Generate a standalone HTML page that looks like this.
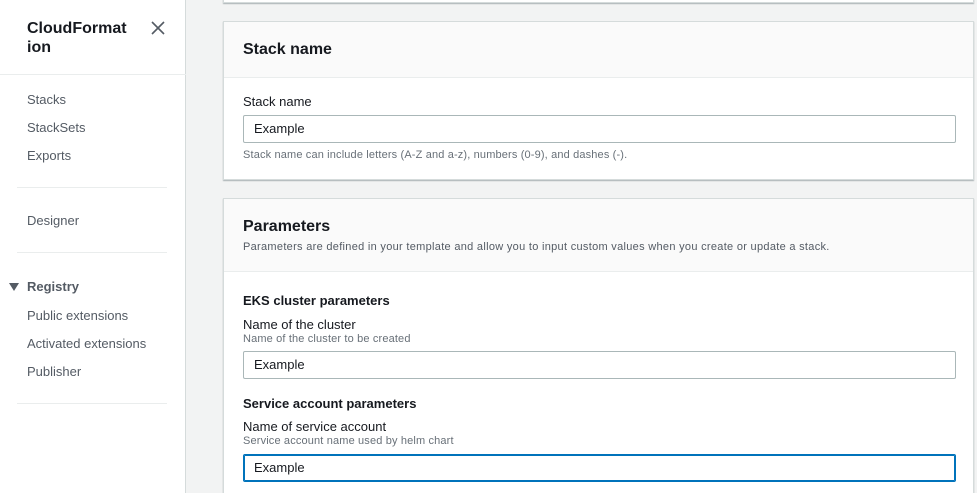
<!DOCTYPE html>
<html style="overflow:hidden;height:493px"><head><style>
*{margin:0;padding:0;box-sizing:border-box}
body{width:977px;height:493px;overflow:hidden;background:#f2f3f3;font-family:"Liberation Sans",sans-serif;color:#16191f;position:relative}
.sb{position:absolute;left:0;top:0;width:186px;height:493px;background:#fff;border-right:1px solid #d5dbdb}
.t{position:absolute;font-size:13px;color:#545b64;left:27px}
.hr{position:absolute;height:1px;background:#eaeded}
.card{position:absolute;left:223px;width:751px;background:#fff;border:1px solid #d5dbdb;box-shadow:0 1px 1px rgba(0,28,36,.3)}
.hd{background:#fafafa;border-bottom:1px solid #eaeded}
.a{position:absolute;white-space:nowrap}
.s{font-size:11px;letter-spacing:0.15px}
.in{position:absolute;left:19px;width:713px;height:28px;border:1px solid #aab7b8;border-radius:2px;font-size:13px;padding:6px 10px;line-height:14px}
</style></head><body>
<div class="sb">
<div class="a" style="left:27px;top:19px;font-size:16px;font-weight:bold;line-height:19px">CloudFormat<br>ion</div>
<svg class="a" style="left:151px;top:21px" width="14" height="14"><path d="M1 1L13 13M13 1L1 13" stroke="#545b64" stroke-width="1.6"/></svg>
<div class="hr" style="left:0;width:186px;top:74px"></div>
<div class="t" style="top:92px">Stacks</div>
<div class="t" style="top:120px">StackSets</div>
<div class="t" style="top:148px">Exports</div>
<div class="hr" style="left:17px;width:150px;top:187px"></div>
<div class="t" style="top:213px">Designer</div>
<div class="hr" style="left:17px;width:150px;top:252px"></div>
<svg class="a" style="left:9px;top:283px" width="10" height="8"><path d="M0 0H10L5 8Z" fill="#545b64"/></svg>
<div class="t" style="top:279px;font-weight:bold;color:#545b64">Registry</div>
<div class="t" style="top:308px">Public extensions</div>
<div class="t" style="top:336px">Activated extensions</div>
<div class="t" style="top:364px">Publisher</div>
<div class="hr" style="left:17px;width:150px;top:403px"></div>
</div>
<div class="card" style="top:-10px;height:13px"></div>
<div class="card" style="top:21px;height:159px">
 <div class="hd" style="height:56px"><div class="a" style="left:19px;top:19px;font-size:16px;font-weight:bold">Stack name</div></div>
 <div class="a" style="left:19px;top:72px;font-size:13px">Stack name</div>
 <div class="in" style="top:93px">Example</div>
 <div class="a s" style="left:19px;top:127px;color:#687078">Stack name can include letters (A-Z and a-z), numbers (0-9), and dashes (-).</div>
</div>
<div class="card" style="top:198px;height:300px">
 <div class="hd" style="height:73px">
  <div class="a" style="left:19px;top:19px;font-size:16px;font-weight:bold">Parameters</div>
  <div class="a s" style="left:19px;top:42px;color:#545b64;letter-spacing:0.3px">Parameters are defined in your template and allow you to input custom values when you create or update a stack.</div>
 </div>
 <div class="a" style="left:19px;top:94px;font-size:13px;font-weight:bold">EKS cluster parameters</div>
 <div class="a" style="left:19px;top:118px;font-size:13px">Name of the cluster</div>
 <div class="a s" style="left:19px;top:134px;color:#687078">Name of the cluster to be created</div>
 <div class="in" style="top:152px">Example</div>
 <div class="a" style="left:19px;top:197px;font-size:13px;font-weight:bold">Service account parameters</div>
 <div class="a" style="left:19px;top:220px;font-size:13px">Name of service account</div>
 <div class="a s" style="left:19px;top:236px;color:#687078">Service account name used by helm chart</div>
 <div class="in" style="top:255px;border:1px solid #0073bb;box-shadow:0 0 0 1px #0073bb inset">Example</div>
</div>
</body></html>
